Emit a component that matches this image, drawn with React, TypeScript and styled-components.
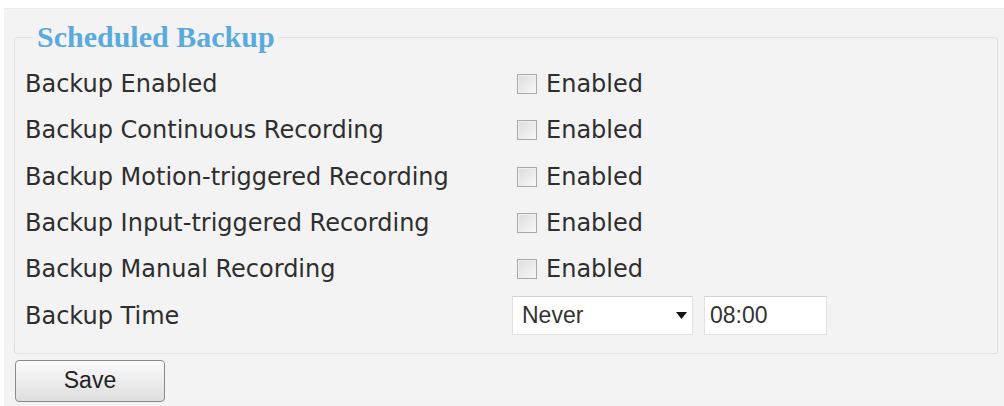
import React from "react";
import styled, { createGlobalStyle } from "styled-components";

const Global = createGlobalStyle`
  html, body { margin: 0; padding: 0; background: #ffffff; }
  body { font-family: "DejaVu Sans", Verdana, sans-serif; }
`;

const Panel = styled.div`
  margin: 8px 0 0 4px;
  height: 398px;
  background: #f3f3f3;
  border-top: 1px solid #ececec;
  box-sizing: border-box;
  padding: 11px 6px 0 10px;
  display: flex;
  flex-direction: column;
  align-items: flex-start;
`;

const Fieldset = styled.fieldset`
  align-self: stretch;
  margin: 0;
  border: 1px solid #e0e0e0;
  border-radius: 3px;
  padding: 7px 10px 14px 10px;
`;

const Legend = styled.legend`
  margin-left: 8px;
  padding: 0 4px;
  font-family: "Liberation Serif", "Times New Roman", serif;
  font-weight: bold;
  font-size: 30px;
  line-height: 34px;
  color: #5aaade;
`;

const Grid = styled.div`
  display: grid;
  grid-template-columns: 487px 1fr;
  grid-auto-rows: 46.3px;
  align-items: center;
`;

const Label = styled.div`
  font-size: 24px;
  color: #2e2e2e;
  white-space: nowrap;
`;

const CheckRow = styled.label`
  display: flex;
  align-items: center;
  gap: 9px;
  padding-left: 5px;
  font-size: 24px;
  color: #2e2e2e;
`;

const Box = styled.span`
  width: 20px;
  height: 20px;
  box-sizing: border-box;
  border: 1px solid #a9a9a9;
  background: linear-gradient(135deg, #dcdcdc, #f8f8f8);
  box-shadow: inset 1px 1px 0 #f0f0f0;
`;

const Controls = styled.div`
  display: flex;
  align-items: center;
  gap: 11px;
`;

const SelectBox = styled.div`
  width: 181px;
  height: 39px;
  box-sizing: border-box;
  background: #fff;
  border: 1px solid #e2e2e2;
  border-top-color: #d0d0d0;
  display: flex;
  align-items: center;
  justify-content: space-between;
  padding: 0 5px 0 9px;
  font-family: "Liberation Sans", Arial, sans-serif;
  font-size: 23px;
  color: #333;
`;

const TextBox = styled.div`
  width: 123px;
  height: 39px;
  box-sizing: border-box;
  background: #fff;
  border: 1px solid #e2e2e2;
  border-top-color: #d0d0d0;
  display: flex;
  align-items: center;
  padding-left: 5px;
  font-family: "Liberation Sans", Arial, sans-serif;
  font-size: 23px;
  color: #333;
`;

const SaveButton = styled.button`
  margin-top: 6px;
  margin-left: 1px;
  width: 150px;
  height: 42px;
  border: 1px solid #8a8a8a;
  border-radius: 4px;
  background: linear-gradient(#fbfbfb, #dedede);
  font-family: "Liberation Sans", Arial, sans-serif;
  font-size: 23px;
  color: #222;
  padding: 0;
`;

const rows = [
  "Backup Enabled",
  "Backup Continuous Recording",
  "Backup Motion-triggered Recording",
  "Backup Input-triggered Recording",
  "Backup Manual Recording",
];

export default function App() {
  return (
    <>
      <Global />
      <Panel>
        <Fieldset>
          <Legend>Scheduled Backup</Legend>
          <Grid>
            {rows.map((r) => (
              <React.Fragment key={r}>
                <Label>{r}</Label>
                <CheckRow>
                  <Box />
                  Enabled
                </CheckRow>
              </React.Fragment>
            ))}
            <Label>Backup Time</Label>
            <Controls>
              <SelectBox>
                Never
                <svg width="11" height="7" viewBox="0 0 11 7">
                  <path d="M0 0 L11 0 L5.5 7 Z" fill="#111" />
                </svg>
              </SelectBox>
              <TextBox>08:00</TextBox>
            </Controls>
          </Grid>
        </Fieldset>
        <SaveButton>Save</SaveButton>
      </Panel>
    </>
  );
}
